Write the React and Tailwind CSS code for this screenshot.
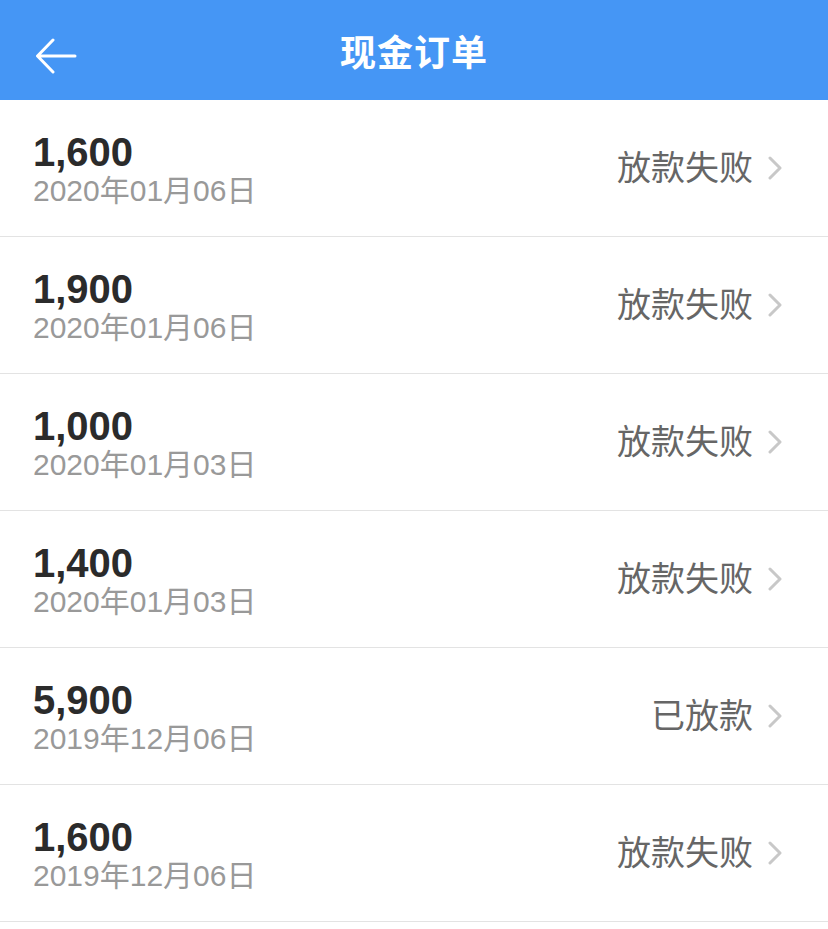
import React from "react";

const orders = [
  { amount: "1,600", date: "2020年01月06日", status: "放款失败" },
  { amount: "1,900", date: "2020年01月06日", status: "放款失败" },
  { amount: "1,000", date: "2020年01月03日", status: "放款失败" },
  { amount: "1,400", date: "2020年01月03日", status: "放款失败" },
  { amount: "5,900", date: "2019年12月06日", status: "已放款" },
  { amount: "1,600", date: "2019年12月06日", status: "放款失败" },
];

function BackArrow() {
  return (
    <svg width="42" height="36" viewBox="0 0 42 36" fill="none">
      <path
        d="M40 18H3M18 2L2.5 18L18 34"
        stroke="white"
        strokeWidth="3"
        strokeLinecap="round"
        strokeLinejoin="round"
      />
    </svg>
  );
}

function Chevron() {
  return (
    <svg width="16" height="24" viewBox="0 0 16 24" fill="none">
      <path
        d="M3 2L13 12L3 22"
        stroke="#c8c8c8"
        strokeWidth="3"
        strokeLinecap="round"
        strokeLinejoin="round"
      />
    </svg>
  );
}

export default function App() {
  return (
    <div className="min-h-[929px] bg-white font-['Liberation_Sans','Noto_Sans_CJK_SC',sans-serif]">
      {/* Header */}
      <header className="relative flex h-[100px] items-center justify-center bg-[#4596f5] pt-[8px]">
        <button className="absolute left-[35px] top-[38px]">
          <BackArrow />
        </button>
        <h1 className="text-[36px] font-semibold text-white tracking-[1px]">
          现金订单
        </h1>
      </header>

      {/* Orders */}
      <ul>
        {orders.map((o, i) => (
          <li
            key={i}
            className="flex h-[137px] items-center justify-between border-b border-[#e3e3e3] pl-[33px] pr-[45px]"
          >
            <div className="flex flex-col pt-[4px]">
              <span className="text-[40px] leading-[40px] font-bold text-[#2b2b2b]">
                {o.amount}
              </span>
              <span className="mt-[2px] text-[30px] leading-[34px] text-[#999999]">
                {o.date}
              </span>
            </div>
            <div className="flex items-center gap-[14px]">
              <span className="text-[34px] text-[#666666]">{o.status}</span>
              <Chevron />
            </div>
          </li>
        ))}
      </ul>
    </div>
  );
}
